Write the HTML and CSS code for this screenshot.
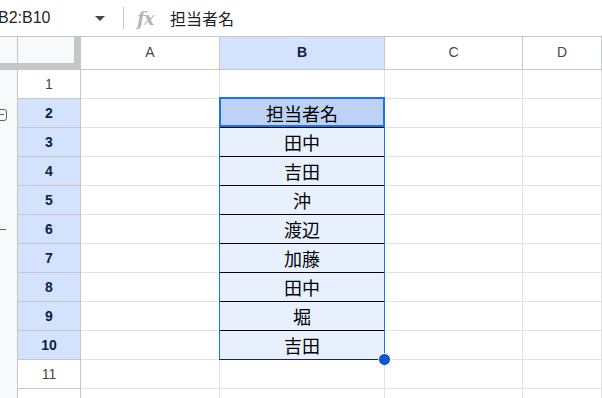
FILE: index.html
```html
<!DOCTYPE html>
<html>
<head>
  <title>担当者名 - Sheet</title>
  <link rel="stylesheet" href="styles.css">
</head>
<body>
  <div class="topbar">
    <div class="namebox">B2:B10</div>
    <div class="caret"></div>
    <div class="divider"></div>
    <div class="fx">fx</div>
    <div class="formula">担当者名</div>
  </div>

  <div class="sheet">
    <!-- header row -->
    <div class="gutter gutter-head"></div>
    <div class="corner"></div>
    <div class="colhead">A</div>
    <div class="colhead sel">B</div>
    <div class="colhead">C</div>
    <div class="colhead">D</div>

    <div class="gutter"></div><div class="rowhead">1</div>
    <div class="cell"></div><div class="cell"></div><div class="cell"></div><div class="cell"></div>

    <div class="gutter"><div class="group-box"></div></div><div class="rowhead sel">2</div>
    <div class="cell"></div><div class="cell tcell thead">担当者名</div><div class="cell"></div><div class="cell"></div>

    <div class="gutter"></div><div class="rowhead sel">3</div>
    <div class="cell"></div><div class="cell tcell">田中</div><div class="cell"></div><div class="cell"></div>

    <div class="gutter"></div><div class="rowhead sel">4</div>
    <div class="cell"></div><div class="cell tcell">吉田</div><div class="cell"></div><div class="cell"></div>

    <div class="gutter"></div><div class="rowhead sel">5</div>
    <div class="cell"></div><div class="cell tcell">沖</div><div class="cell"></div><div class="cell"></div>

    <div class="gutter"><div class="group-end"></div></div><div class="rowhead sel">6</div>
    <div class="cell"></div><div class="cell tcell">渡辺</div><div class="cell"></div><div class="cell"></div>

    <div class="gutter"></div><div class="rowhead sel">7</div>
    <div class="cell"></div><div class="cell tcell">加藤</div><div class="cell"></div><div class="cell"></div>

    <div class="gutter"></div><div class="rowhead sel">8</div>
    <div class="cell"></div><div class="cell tcell">田中</div><div class="cell"></div><div class="cell"></div>

    <div class="gutter"></div><div class="rowhead sel">9</div>
    <div class="cell"></div><div class="cell tcell">堀</div><div class="cell"></div><div class="cell"></div>

    <div class="gutter"></div><div class="rowhead sel">10</div>
    <div class="cell"></div><div class="cell tcell">吉田</div><div class="cell"></div><div class="cell"></div>

    <div class="gutter"></div><div class="rowhead">11</div>
    <div class="cell"></div><div class="cell"></div><div class="cell"></div><div class="cell"></div>

    <div class="gutter"></div><div class="rowhead">12</div>
    <div class="cell"></div><div class="cell"></div><div class="cell"></div><div class="cell"></div>

    <!-- selection overlay -->
    <div class="range"></div>
    <div class="active"></div>
    <div class="handle"></div>
  </div>
</body>
</html>
```

FILE: styles.css
```css
body {
  margin: 0;
  padding: 0;
  width: 602px;
  height: 398px;
  overflow: hidden;
  background: #fff;
  font-family: "Liberation Sans", Arial, sans-serif;
  color: #1f1f1f;
}

/* formula bar */
.topbar {
  height: 36px;
  display: flex;
  align-items: center;
  border-bottom: 1px solid #c4c7c5;
}

.namebox {
  margin-left: -2px;
  width: 97px;
  font-size: 16px;
  color: #1f1f1f;
}

.caret {
  width: 0;
  height: 0;
  border-left: 5px solid transparent;
  border-right: 5px solid transparent;
  border-top: 5px solid #444746;
  margin-right: 18px;
}

.divider {
  width: 1px;
  height: 22px;
  background: #c4c7c5;
  margin-right: 13px;
}

.fx {
  width: 33px;
  font-family: "DejaVu Serif", "Liberation Serif", serif;
  font-style: italic;
  font-weight: bold;
  font-size: 18px;
  color: #b4b6b8;
  letter-spacing: -1px;
}

.formula {
  font-family: "Noto Sans CJK JP", sans-serif;
  font-size: 16px;
  color: #1f1f1f;
}

/* grid */
.sheet {
  position: relative;
  display: grid;
  grid-template-columns: 18px 63px 139px 165px 138px 1fr;
  grid-template-rows: 33px repeat(12, 29px);
}

.sheet > div {
  box-sizing: border-box;
}

.gutter {
  background: #f8f9fa;
  border-right: 1px solid #c4c7c5;
  display: flex;
  align-items: center;
}

.gutter-head {
  border-bottom: 1px solid #c4c7c5;
  box-shadow: inset 0 -6px 0 #c4c7c5;
}

.corner {
  background: #f8f9fa;
  border-right: 1px solid #c4c7c5;
  border-bottom: 1px solid #c4c7c5;
  box-shadow: inset -6px -6px 0 #c4c7c5;
}

.colhead {
  display: flex;
  align-items: center;
  justify-content: center;
  padding-bottom: 2px;
  font-size: 14px;
  color: #444746;
  border-right: 1px solid #c4c7c5;
  border-bottom: 1px solid #c4c7c5;
}

.rowhead {
  display: flex;
  align-items: center;
  justify-content: center;
  font-size: 14px;
  color: #444746;
  border-right: 1px solid #c4c7c5;
  border-bottom: 1px solid #c4c7c5;
}

.colhead.sel,
.rowhead.sel {
  background: #d3e3fd;
  color: #0b1f47;
  font-weight: bold;
}

.cell {
  border-right: 1px solid #e1e1e1;
  border-bottom: 1px solid #e1e1e1;
}

.tcell {
  display: flex;
  align-items: center;
  justify-content: center;
  background: #e8f0fe;
  border-bottom: 1px solid #000;
  font-family: "Noto Sans CJK JP", sans-serif;
  font-size: 18px;
  line-height: 1;
  color: #000;
}

.tcell.thead {
  background: #bdd2f6;
}

/* row group controls */
.group-box {
  position: relative;
  margin-left: -5px;
  margin-top: 2px;
  width: 12px;
  height: 12px;
  border: 1px solid #5f6368;
  border-radius: 3px;
  box-sizing: border-box;
}

.group-box::after {
  content: "";
  position: absolute;
  left: 2px;
  top: 4px;
  width: 6px;
  height: 1px;
  background: #5f6368;
}

.group-end {
  width: 6px;
  height: 1px;
  background: #5f6368;
}

/* selection */
.range {
  position: absolute;
  left: 219px;
  top: 61px;
  width: 166px;
  height: 262px;
  border: 1px solid #1a73e8;
  border-bottom-color: #0b2a6e;
  box-sizing: border-box;
}

.active {
  position: absolute;
  left: 219px;
  top: 60px;
  width: 166px;
  height: 30px;
  border: 2px solid #1a73e8;
  box-sizing: border-box;
}

.handle {
  position: absolute;
  left: 378px;
  top: 316px;
  width: 13px;
  height: 13px;
  border-radius: 50%;
  background: #0b57d0;
  border: 1px solid #fff;
  box-sizing: border-box;
}
```
